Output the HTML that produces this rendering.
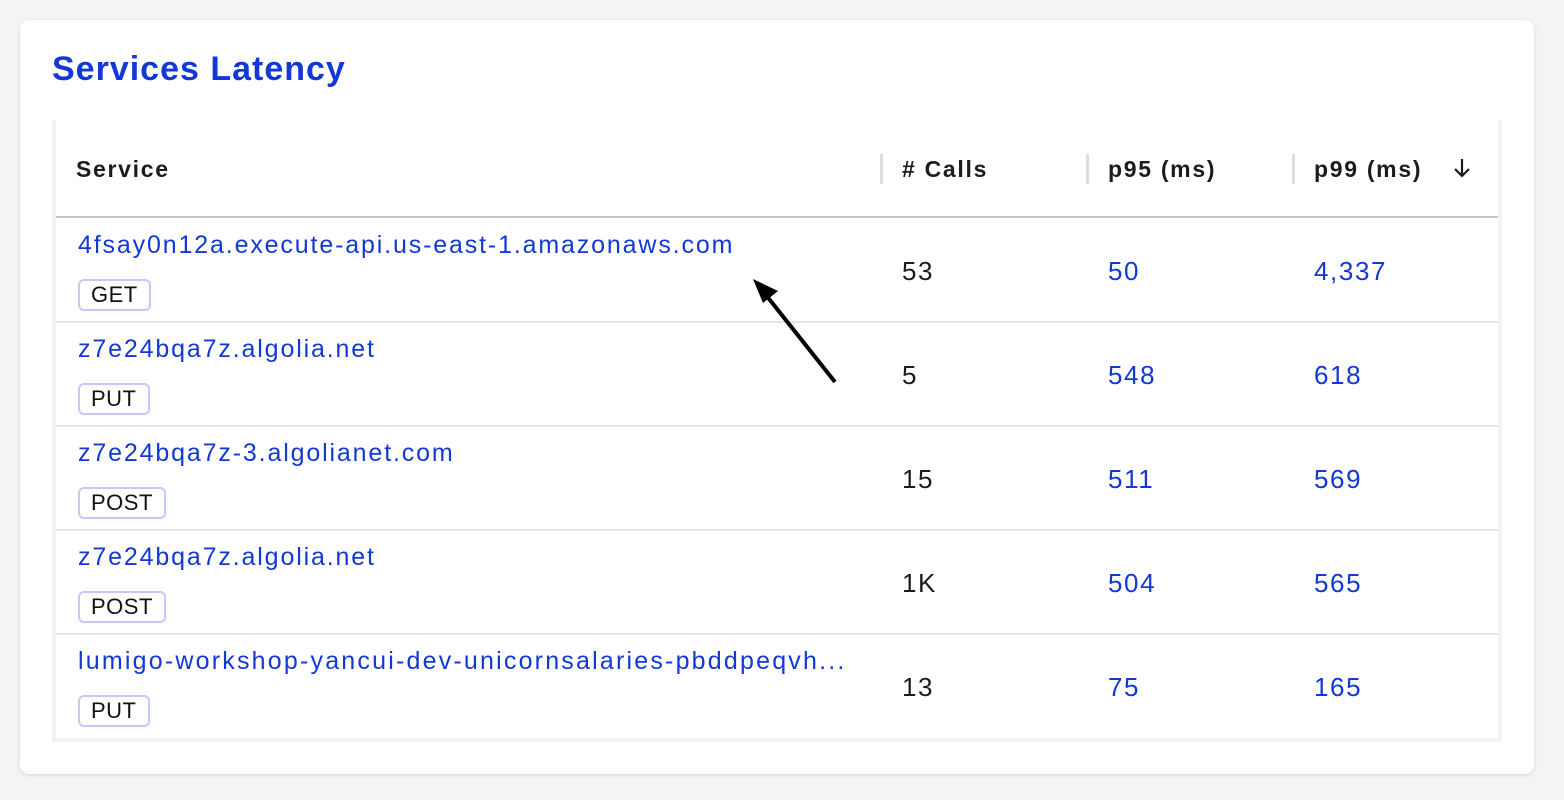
<!DOCTYPE html>
<html><head><style>
*{box-sizing:border-box;margin:0;padding:0}
body{width:1564px;height:800px;background:#f4f4f5;font-family:"Liberation Sans",Arial,sans-serif;position:relative;overflow:hidden}
.card{position:absolute;left:20px;top:20px;width:1514px;height:754px;background:#fff;border-radius:9px;box-shadow:0 1px 4px rgba(0,0,0,.12)}
h1{position:absolute;left:52px;top:50px;font-size:34px;font-weight:bold;color:#1238d6;letter-spacing:1px}
.tbl{position:absolute;left:52px;top:120px;width:1450px;height:622px;border:4px solid #f1f2f4;border-top:none;background:#fff}
.hdr{position:absolute;left:0;top:0;width:1442px;height:98px;border-bottom:2px solid #c4c6cb}
.h{position:absolute;top:36px;font-size:23px;font-weight:bold;color:#1c1c1e;letter-spacing:1.7px}
.sep{position:absolute;top:34px;width:3px;height:30px;background:#dcdde0}
.row{position:absolute;left:0;width:1442px;height:104px;border-bottom:2px solid #e3e5ea}
.lnk{position:absolute;left:22px;top:12px;font-size:25px;letter-spacing:1.85px;color:#1238d6;white-space:nowrap}
.badge{position:absolute;left:22px;top:60px;height:32px;padding:0 11px;border:2px solid #c5c8fb;border-radius:6px;font-size:22px;line-height:28px;color:#111;letter-spacing:0.5px}
.v{position:absolute;top:37px;font-size:26px;letter-spacing:1.6px;color:#1238d6}
.c{color:#1c1c1e}
</style></head><body>
<div class="card"></div>
<h1>Services Latency</h1>
<div class="tbl">
 <div class="hdr">
  <div class="h" style="left:20px">Service</div>
  <div class="sep" style="left:824px"></div><div class="h" style="left:846px"># Calls</div>
  <div class="sep" style="left:1030px"></div><div class="h" style="left:1052px">p95 (ms)</div>
  <div class="sep" style="left:1236px"></div><div class="h" style="left:1258px">p99 (ms)</div>
  <svg style="position:absolute;left:1396px;top:37px" width="20" height="22" viewBox="0 0 20 22"><path d="M10 2V19M3 12l7 7 7-7" fill="none" stroke="#1c1c1e" stroke-width="2.2"/></svg>
 </div>
 <div class="row" style="top:99px"><div class="lnk">4fsay0n12a.execute-api.us-east-1.amazonaws.com</div><div class="badge">GET</div><div class="v c" style="left:846px">53</div><div class="v" style="left:1052px">50</div><div class="v" style="left:1258px">4,337</div></div>
 <div class="row" style="top:203px"><div class="lnk">z7e24bqa7z.algolia.net</div><div class="badge">PUT</div><div class="v c" style="left:846px">5</div><div class="v" style="left:1052px">548</div><div class="v" style="left:1258px">618</div></div>
 <div class="row" style="top:307px"><div class="lnk">z7e24bqa7z-3.algolianet.com</div><div class="badge">POST</div><div class="v c" style="left:846px">15</div><div class="v" style="left:1052px">511</div><div class="v" style="left:1258px">569</div></div>
 <div class="row" style="top:411px"><div class="lnk">z7e24bqa7z.algolia.net</div><div class="badge">POST</div><div class="v c" style="left:846px">1K</div><div class="v" style="left:1052px">504</div><div class="v" style="left:1258px">565</div></div>
 <div class="row" style="top:515px;border-bottom:none"><div class="lnk" style="letter-spacing:2.2px">lumigo-workshop-yancui-dev-unicornsalaries-pbddpeqvh...</div><div class="badge">PUT</div><div class="v c" style="left:846px">13</div><div class="v" style="left:1052px">75</div><div class="v" style="left:1258px">165</div></div>
</div>
<svg style="position:absolute;left:0;top:0" width="1564" height="800"><path d="M835 382L762 290" stroke="#000" stroke-width="4" fill="none"/><path d="M753 279L778 291L763 303Z" fill="#000"/></svg>
</body></html>
